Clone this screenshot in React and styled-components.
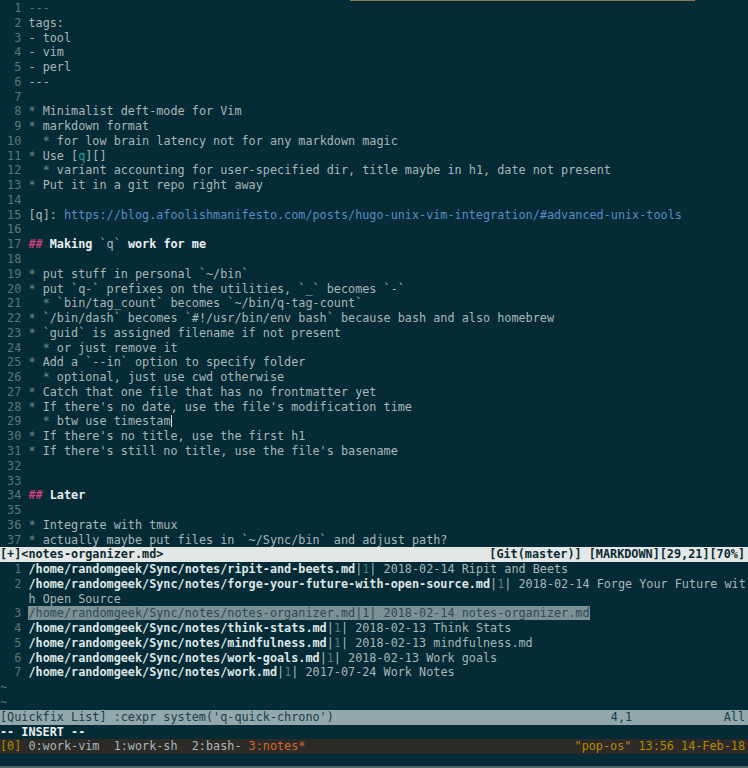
import React from 'react'
import styled, { createGlobalStyle } from 'styled-components'

// solarized-ish terminal palette, eyeballed from the screenshot
const C = {
  bg: '#042b36',
  text: '#a9b7b8',
  dim: '#5b777e',
  bullet: '#6f878c',
  head: '#e9eff0',
  pink: '#cf3f7f',
  link: '#5a8dc6',
  cyan: '#2aa198',
  file: '#dfe6e6',
  yellow: '#b58900',
  orange: '#d9652c',
}

const ROW = '14.77px'

const GlobalStyle = createGlobalStyle`
  html, body { margin: 0; padding: 0; background: ${C.bg}; }
  body { overflow: hidden; }
`

const Screen = styled.div`
  width: 748px;
  height: 768px;
  display: flex;
  flex-direction: column;
  background: ${C.bg};
  color: ${C.text};
  font-family: "DejaVu Sans Mono", "Liberation Mono", monospace;
  font-size: 11.8px;
  overflow: hidden;
`

const TopEdge = styled.div`
  height: 1px;
  display: flex;
`

const GoldSeg = styled.span`
  margin-left: 350px;
  width: 345px;
  background: #8b7b3c;
`

const barBg = {
  status: '#e3e7e5',
  qfstat: '#93a8aa',
  tmux: '#2c2b28',
}

const Row = styled.div`
  height: ${ROW};
  line-height: ${ROW};
  white-space: pre;
  overflow: hidden;
  background: ${p => barBg[p.$bar] || 'transparent'};
  ${p => p.$bar === 'status' && `
    display: flex;
    justify-content: space-between;
    padding-right: 3px;
    color: #0b2a33;
    font-weight: bold;
  `}
  ${p => p.$bar === 'qfstat' && `
    display: grid;
    grid-template-columns: 86ch 1fr auto;
    padding-right: 3px;
    color: #173e49;
  `}
  ${p => p.$bar === 'tmux' && `
    display: flex;
    justify-content: space-between;
    padding-right: 3px;
  `}
`

const tokColor = {
  n: C.text,
  d: C.dim,
  b: C.bullet,
  h: C.head,
  p: C.pink,
  l: C.link,
  c: C.cyan,
  f: C.file,
  y: C.yellow,
  o: C.orange,
  w: C.head,
}

const Tok = styled.span`
  color: ${p => tokColor[p.$k]};
  font-weight: ${p => (p.$k === 'h' || p.$k === 'f' || p.$k === 'p' || p.$k === 'w') ? 'bold' : 'normal'};
`

const LineNr = styled.span`
  color: ${C.dim};
`

const Cursor = styled.span`
  display: inline-block;
  width: 0;
  height: 12px;
  border-left: 1px solid #d4dcdc;
  vertical-align: -2px;
`

const Selected = styled.span`
  background: #7c9194;
  color: #2c4a53;
`

const Tilde = styled.div`
  height: ${ROW};
  line-height: ${ROW};
  color: ${C.dim};
`

const Filler = styled.div`
  flex: 1;
`

const BottomEdge = styled.div`
  height: 2px;
  background: #4b666c;
`

const li = (level, text) => [['n', '  '.repeat(level)], ['b', '*'], ['n', ' ' + text]]

const fileLines = [
  [['d', '---']],
  [['n', 'tags:']],
  [['n', '- tool']],
  [['n', '- vim']],
  [['n', '- perl']],
  [['n', '---']],
  [],
  li(0, 'Minimalist deft-mode for Vim'),
  li(0, 'markdown format'),
  li(1, 'for low brain latency not for any markdown magic'),
  [['b', '*'], ['n', ' Use ['], ['c', 'q'], ['n', '][]']],
  li(1, 'variant accounting for user-specified dir, title maybe in h1, date not present'),
  li(0, 'Put it in a git repo right away'),
  [],
  [['n', '[q]: '], ['l', 'https://blog.afoolishmanifesto.com/posts/hugo-unix-vim-integration/#advanced-unix-tools']],
  [],
  [['p', '##'], ['h', ' Making '], ['n', '`q`'], ['h', ' work for me']],
  [],
  li(0, 'put stuff in personal `~/bin`'),
  li(0, 'put `q-` prefixes on the utilities, `_` becomes `-`'),
  li(1, '`bin/tag_count` becomes `~/bin/q-tag-count`'),
  li(0, '`/bin/dash` becomes `#!/usr/bin/env bash` because bash and also homebrew'),
  li(0, '`guid` is assigned filename if not present'),
  li(1, 'or just remove it'),
  li(0, 'Add a `--in` option to specify folder'),
  li(1, 'optional, just use cwd otherwise'),
  li(0, 'Catch that one file that has no frontmatter yet'),
  li(0, "If there's no date, use the file's modification time"),
  [...li(1, 'btw use timestam'), ['cursor']],
  li(0, "If there's no title, use the first h1"),
  li(0, "If there's still no title, use the file's basename"),
  [],
  [],
  [['p', '##'], ['h', ' Later']],
  [],
  li(0, 'Integrate with tmux'),
  li(0, 'actually maybe put files in `~/Sync/bin` and adjust path?'),
]

const NOTES = '/home/randomgeek/Sync/notes/'

const quickfix = [
  { n: 1, file: 'ripit-and-beets.md', date: '2018-02-14', title: 'Ripit and Beets' },
  { n: 2, file: 'forge-your-future-with-open-source.md', date: '2018-02-14', title: 'Forge Your Future wit', wrap: 'h Open Source' },
  { n: 3, file: 'notes-organizer.md', date: '2018-02-14', title: 'notes-organizer.md', selected: true },
  { n: 4, file: 'think-stats.md', date: '2018-02-13', title: 'Think Stats' },
  { n: 5, file: 'mindfulness.md', date: '2018-02-13', title: 'mindfulness.md' },
  { n: 6, file: 'work-goals.md', date: '2018-02-13', title: 'Work goals' },
  { n: 7, file: 'work.md', date: '2017-07-24', title: 'Work Notes' },
]

const nr = n => String(n).padStart(3) + ' '

function Tokens({ parts }) {
  return parts.map(([k, t], i) =>
    k === 'cursor' ? <Cursor key={i} /> : <Tok key={i} $k={k}>{t}</Tok>
  )
}

function QuickfixEntry({ item }) {
  if (item.selected) {
    return (
      <Row>
        <LineNr>{nr(item.n)}</LineNr>
        <Selected>{`${NOTES}${item.file}|1| ${item.date} ${item.title}`}</Selected>
      </Row>
    )
  }
  return (
    <>
      <Row>
        <LineNr>{nr(item.n)}</LineNr>
        <Tok $k="f">{NOTES + item.file}</Tok>
        <Tok $k="n">|</Tok>
        <Tok $k="d">1</Tok>
        <Tok $k="n">{`| ${item.date} ${item.title}`}</Tok>
      </Row>
      {item.wrap && (
        <Row>
          <LineNr>{'    '}</LineNr>
          <Tok $k="n">{item.wrap}</Tok>
        </Row>
      )}
    </>
  )
}

export default function App() {
  return (
    <Screen>
      <GlobalStyle />
      <TopEdge><GoldSeg /></TopEdge>

      {fileLines.map((parts, i) => (
        <Row key={i}>
          <LineNr>{nr(i + 1)}</LineNr>
          <Tokens parts={parts} />
        </Row>
      ))}

      <Row $bar="status">
        <span>[+]&lt;notes-organizer.md&gt;</span>
        <span>[Git(master)] [MARKDOWN][29,21][70%]</span>
      </Row>

      {quickfix.map(item => <QuickfixEntry key={item.n} item={item} />)}

      <Tilde>~</Tilde>
      <Tilde>~</Tilde>

      <Row $bar="qfstat">
        <span>[Quickfix List] :cexpr system('q-quick-chrono')</span>
        <span>4,1</span>
        <span>All</span>
      </Row>

      <Row>
        <Tok $k="w">-- INSERT --</Tok>
      </Row>

      <Row $bar="tmux">
        <span>
          <Tok $k="y">[0]</Tok>
          <Tok $k="n"> 0:work-vim  1:work-sh  2:bash- </Tok>
          <Tok $k="o">3:notes*</Tok>
        </span>
        <Tok $k="y">"pop-os" 13:56 14-Feb-18</Tok>
      </Row>

      <Filler />
      <BottomEdge />
    </Screen>
  )
}
